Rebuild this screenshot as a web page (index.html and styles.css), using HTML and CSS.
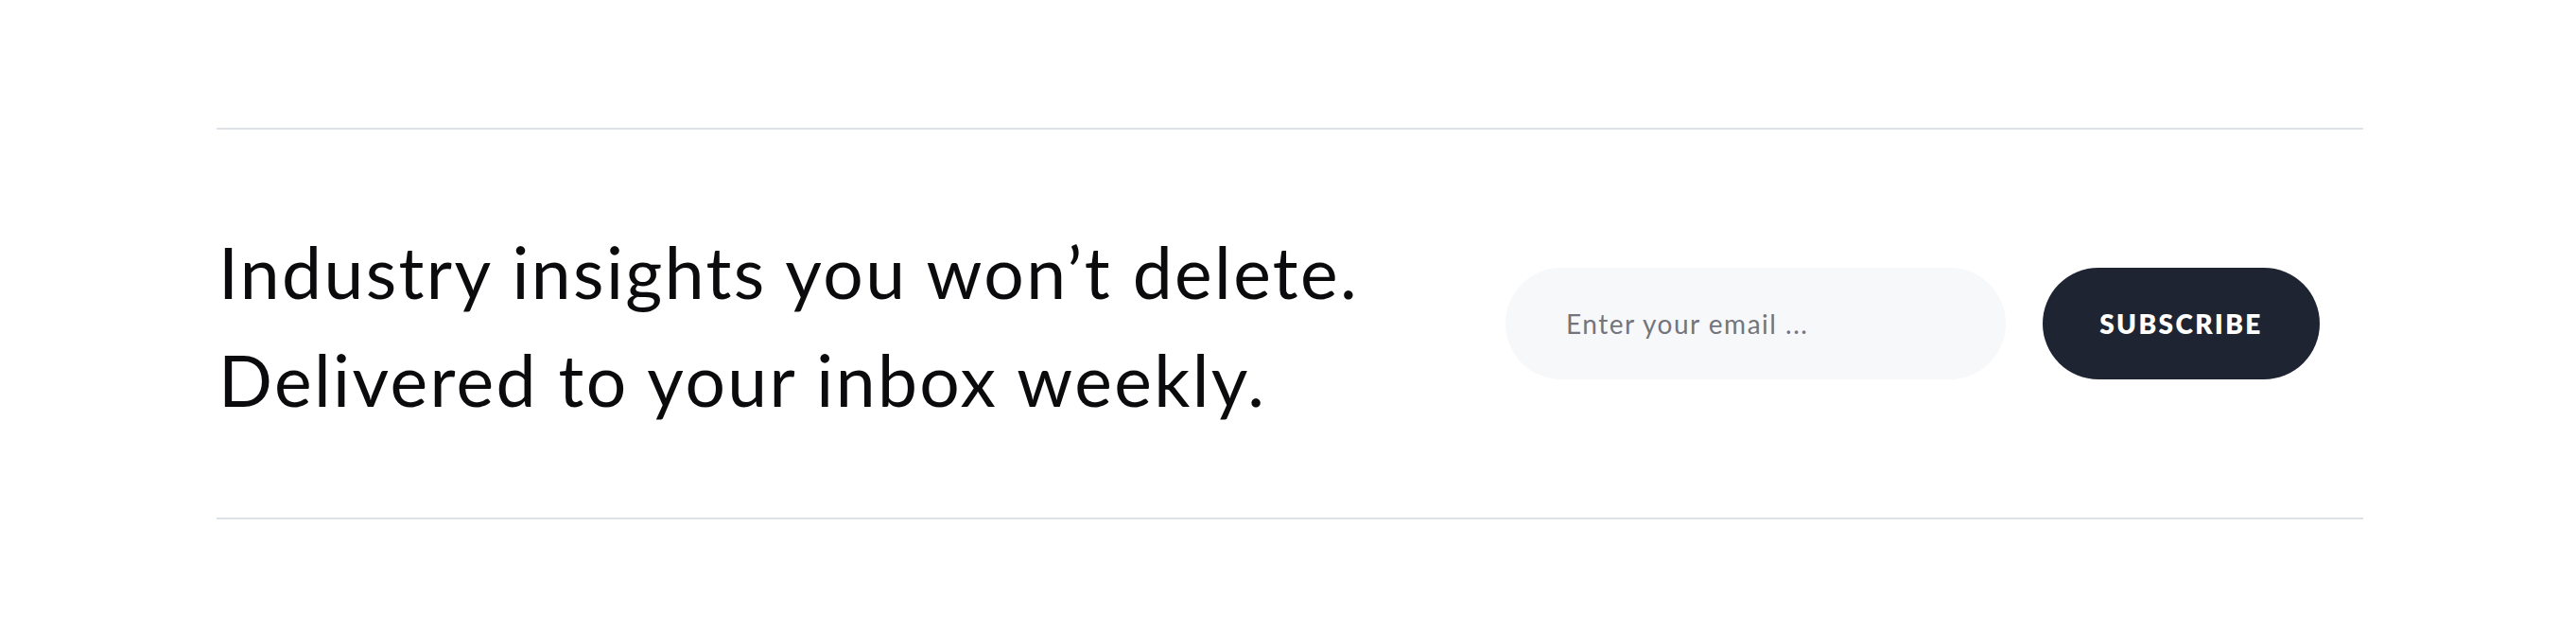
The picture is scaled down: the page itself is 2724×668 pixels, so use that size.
FILE: index.html
```html
<!DOCTYPE html>
<html lang="en">
<head>
<meta charset="utf-8">
<title>Newsletter</title>
<link rel="stylesheet" href="styles.css">
</head>
<body>
  <section class="newsletter">
    <h2 class="newsletter-title">Industry insights you won’t delete.<br>Delivered to your inbox weekly.</h2>
    <form class="newsletter-form">
      <input class="newsletter-input" type="email" placeholder="Enter your email ...">
      <button class="newsletter-button" type="button">SUBSCRIBE</button>
    </form>
  </section>
</body>
</html>
```

FILE: styles.css
```css
html, body {
  margin: 0;
  padding: 0;
  background: #ffffff;
}

body {
  padding-top: 135px;
  font-family: "Lato", "Liberation Sans", sans-serif;
}

.newsletter {
  box-sizing: border-box;
  width: 2270px;
  height: 414px;
  margin-left: 229px;
  border-top: 2px solid #dde2e8;
  border-bottom: 2px solid #dde2e8;
  display: flex;
  align-items: center;
  justify-content: space-between;
}

.newsletter-title {
  margin: 4px 0 0 2px;
  font-size: 75px;
  line-height: 114px;
  font-weight: 400;
  color: #0b0b0d;
  letter-spacing: 2.4px;
}

.newsletter-form {
  display: flex;
  gap: 39px;
  margin: 0 46px 0 0;
}

.newsletter-input {
  box-sizing: border-box;
  width: 529px;
  height: 118px;
  border: none;
  outline: none;
  border-radius: 59px;
  background: #f7f8fa;
  padding: 0 0 0 64px;
  font-family: "Lato", "Liberation Sans", sans-serif;
  font-size: 28px;
  letter-spacing: 1.5px;
  color: #333;
}

.newsletter-input::placeholder {
  color: #74747c;
}

.newsletter-button {
  box-sizing: border-box;
  width: 293px;
  height: 118px;
  border: none;
  border-radius: 59px;
  background: #1f2433;
  color: #ffffff;
  font-family: "Lato", "Liberation Sans", sans-serif;
  font-weight: 800;
  font-size: 28px;
  letter-spacing: 2.4px;
  cursor: pointer;
}
```
